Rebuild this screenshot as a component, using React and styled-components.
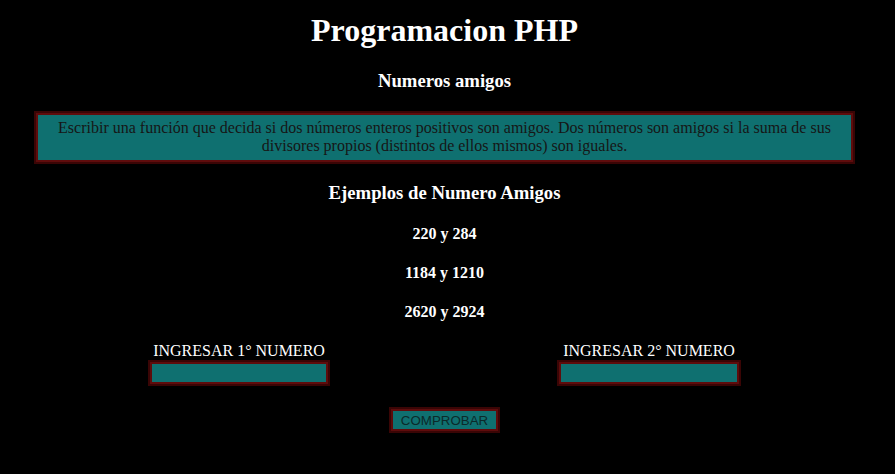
import React from "react";
import styled, { createGlobalStyle } from "styled-components";

const GlobalStyle = createGlobalStyle`
  body {
    margin: 0;
    background: #000;
    color: #fff;
    font-family: "Liberation Serif", "Times New Roman", serif;
  }
`;

const frame = `
  border: 2px solid #3a0505;
  box-shadow: inset 0 0 0 2px #5e0c0c;
`;

const Page = styled.main`
  padding: 12px 40px 20px 34px;
  text-align: center;
`;

const Title = styled.h1`
  font-size: 32px;
  margin: 0 0 21px;
`;

const Subtitle = styled.h3`
  font-size: 18.72px;
  margin: 18.72px 0;
`;

const Statement = styled.p`
  margin: 18px 0;
  padding: 6px 10px 7px;
  background: #0f7070;
  color: #161616;
  ${frame}
  font-size: 16px;
  line-height: 18px;
`;

const Pair = styled.h4`
  font-size: 16px;
  margin: 21px 0;
`;

const Inputs = styled.div`
  display: flex;
  justify-content: center;
  gap: 227px;
  margin-top: 15px;
`;

const Field = styled.label`
  display: flex;
  flex-direction: column;
  align-items: center;
  font-size: 16px;
  line-height: 18px;
`;

const NumberInput = styled.input`
  box-sizing: border-box;
  width: ${(p) => p.$w}px;
  height: 26px;
  padding: 4px;
  background: #0f7070;
  ${frame}
  outline: none;
`;

const Submit = styled.button`
  box-sizing: border-box;
  margin-top: 21px;
  height: 26px;
  padding: 0 10px;
  background: #0f7070;
  color: #0c2a2a;
  ${frame}
  font-family: "Liberation Sans", Arial, sans-serif;
  font-size: 13.33px;
`;

export default function App() {
  return (
    <>
      <GlobalStyle />
      <Page>
        <Title>Programacion PHP</Title>
        <Subtitle>Numeros amigos</Subtitle>
        <Statement>
          Escribir una función que decida si dos números enteros positivos son amigos. Dos números son
          amigos si la suma de sus divisores propios (distintos de ellos mismos) son iguales.
        </Statement>
        <Subtitle>Ejemplos de Numero Amigos</Subtitle>
        <Pair>220 y 284</Pair>
        <Pair>1184 y 1210</Pair>
        <Pair>2620 y 2924</Pair>
        <Inputs>
          <Field>
            INGRESAR 1° NUMERO
            <NumberInput type="text" $w={182} />
          </Field>
          <Field>
            INGRESAR 2° NUMERO
            <NumberInput type="text" $w={184} />
          </Field>
        </Inputs>
        <Submit type="button">COMPROBAR</Submit>
      </Page>
    </>
  );
}
